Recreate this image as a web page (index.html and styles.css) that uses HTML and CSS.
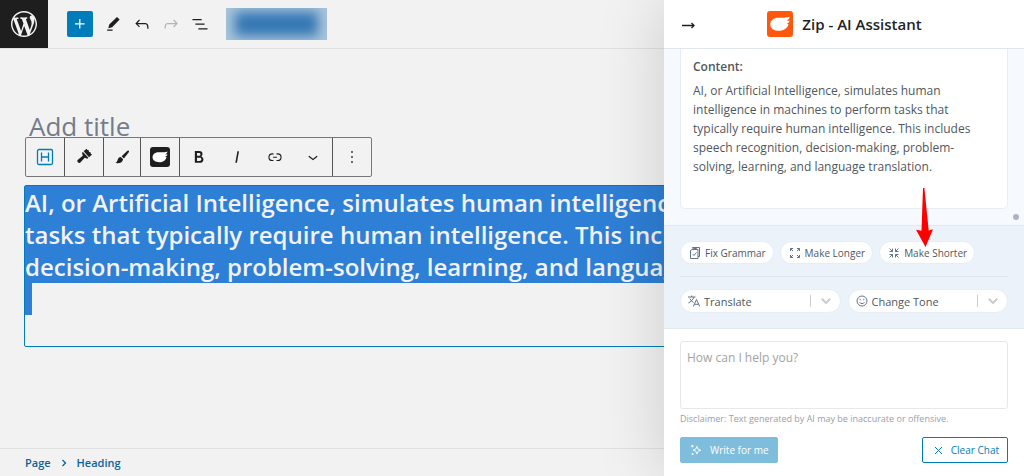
FILE: index.html
```
<!DOCTYPE html>
<html lang="en">
<head>
  <meta charset="utf-8">
  <title>Edit Page</title>
  <link rel="stylesheet" href="styles.css">
</head>
<body>
  <svg class="defs" width="0" height="0">
    <symbol id="zip" viewBox="0 0 26 26">
      <path d="M3.300 13.400C3.300 9.200 7 6.800 11.500 6.800c4 0 7.800.2 11.300-1-.4 1.900-1.500 3-3.300 3.700l3.200.2c-.5 1.700-1.700 2.700-3.400 3.100l2.200.5c-1 3.900-4.900 6.500-9.400 6.500-4.900 0-8.800-2.400-8.800-6.400z"/>
    </symbol>
  </svg>

  <div class="editor">
    <header class="top-bar">
      <a class="wp-logo" href="#" aria-label="View Pages">
        <svg width="26" height="26" viewBox="0 0 20 20"><path d="M20 10c0-5.51-4.49-10-10-10C4.48 0 0 4.49 0 10c0 5.52 4.48 10 10 10 5.51 0 10-4.48 10-10zM7.780 15.370L4.370 6.220c.55-.02 1.170-.08 1.170-.08.5-.06.44-1.130-.06-1.110 0 0-1.450.11-2.370.11-.18 0-.37 0-.58-.01C4.120 2.690 6.870 1.110 10 1.110c2.330 0 4.450.87 6.050 2.340-.68-.11-1.650.39-1.650 1.580 0 .74.45 1.360.9 2.100.35.61.55 1.360.55 2.460 0 1.490-1.400 5-1.400 5l-3.030-8.370c.54-.02.82-.17.82-.17.5-.05.44-1.250-.06-1.220 0 0-1.440.12-2.380.12-.87 0-2.330-.12-2.330-.12-.5-.03-.56 1.200-.06 1.220l.92.08 1.260 3.410zM17.410 10c.24-.64.74-1.870.43-4.250.7 1.290 1.050 2.710 1.050 4.250 0 3.290-1.730 6.240-4.400 7.780.97-2.590 1.940-5.200 2.920-7.780zM6.100 18.090C3.120 16.650 1.110 13.530 1.110 10c0-1.300.23-2.480.72-3.590C3.250 10.300 4.670 14.200 6.100 18.090zm4.030-6.630l2.580 6.980c-.86.29-1.760.45-2.710.45-.79 0-1.570-.11-2.290-.33.81-2.380 1.620-4.740 2.420-7.100z"/></svg>
      </a>
      <div class="tools">
        <button class="add" aria-label="Add block"><svg width="20" height="20" viewBox="0 0 24 24"><path d="M11 12.500V17.500H12.500V12.500H17.500V11H12.500V6H11V11H6V12.500H11Z"/></svg></button>
        <button aria-label="Tools"><svg width="20" height="20" viewBox="0 0 24 24"><path d="m20 6.500-3.200-3-9.300 9-1.200 4.700 4.700-1.200L20 6.500Zm-8.500 12H5V20h6.500v-1.500Z"/></svg></button>
        <button aria-label="Undo"><svg width="20" height="20" viewBox="0 0 24 24"><path d="M18.300 11.700c-.6-.6-1.400-.9-2.300-.9H6.700l2.900-3.300-1.100-1-4.500 5L8.500 16l1-1-2.700-2.700H16c.5 0 .9.2 1.300.5 1 1 1 3.400 1 4.500v.3h1.500v-.2c0-1.500 0-4.300-1.500-5.700z"/></svg></button>
        <button class="off" aria-label="Redo"><svg width="20" height="20" viewBox="0 0 24 24"><path d="M15.600 6.500l-1.100 1 2.900 3.300H8c-.9 0-1.700.3-2.300.9-1.400 1.500-1.400 4.200-1.400 5.600v.2h1.500v-.3c0-1.100 0-3.500 1-4.500.3-.3.7-.5 1.300-.5h9.200L14.500 15l1.100 1.100 4.600-4.600-4.600-5z"/></svg></button>
        <button aria-label="Document overview"><svg width="20" height="20" viewBox="0 0 24 24"><path d="M3 6h11v1.500H3V6Zm3.500 5.500h11V13h-11v-1.500ZM21 17H10v1.500h11V17Z"/></svg></button>
      </div>
      <div class="blurred"><span></span></div>
    </header>

    <main class="canvas">
      <input class="title" type="text" placeholder="Add title" aria-label="Add title">

      <div class="block-toolbar">
        <div class="group">
          <button class="blue" aria-label="Heading"><svg class="line" width="18" height="18" viewBox="0 0 18 18"><rect x="1.500" y="1.500" width="15" height="15" rx="1.500"/><path d="M5.500 4.500v9M12.500 4.500v9M5.500 9h7"/></svg></button>
        </div>
        <div class="group">
          <button aria-label="Copy styles"><svg width="16" height="16" viewBox="0 0 18 18"><g transform="rotate(48 9 9)"><path d="M4 0l1.500 1L7 0l1.500 1L10 0l1.500 1L13 0v5H4zM4 6h9v1.500l-2.800 1.500v1l.6 6.500c0 2-4.200 2-4.200 0L7 10V9L4 7.500z"/></g></svg></button>
        </div>
        <div class="group narrow">
          <button aria-label="Paste styles"><svg width="18" height="18" viewBox="0 0 18 18"><path d="M15.700 2.700c.6.600.3 1.200-.1 1.700L10.900 10.400 8.600 8.200l5.500-5.200c.5-.5 1.100-.8 1.600-.3zM7.800 9l2.300 2.200c-.3 2.700-2.900 4.600-7.800 3.900 1.500-.7 1.800-1.800 2.300-3.200.5-1.700 1.600-2.800 3.200-2.900z"/></svg></button>
        </div>
        <div class="group">
          <button aria-label="Zip AI"><span class="zip-dark"><svg width="20" height="20"><use href="#zip"/></svg></span></button>
        </div>
        <div class="group">
          <button aria-label="Bold"><svg width="20" height="20" viewBox="0 0 24 24"><path d="M14.700 11.300c1-.6 1.500-1.600 1.500-3 0-2.300-1.300-3.400-4-3.400H7v14h5.800c1.400 0 2.500-.3 3.300-1 .8-.7 1.200-1.700 1.200-2.900.1-1.900-.8-3.100-2.600-3.700zm-5.100-4h2.300c.6 0 1.100.1 1.400.4.3.3.5.7.5 1.200s-.2 1-.5 1.200c-.3.3-.8.4-1.400.4H9.600V7.300zm4.600 9c-.4.3-1 .4-1.700.4H9.600v-3.900h2.900c.7 0 1.300.2 1.700.5.4.3.6.8.6 1.500s-.2 1.200-.6 1.500z"/></svg></button>
          <button aria-label="Italic"><svg width="20" height="20" viewBox="0 0 24 24"><path d="M12.500 5L10 19h1.900l2.500-14z"/></svg></button>
          <button aria-label="Link"><svg width="18" height="18" viewBox="0 0 24 24"><path d="M10 17.400H8.400A5.200 5.200 0 1 1 8.400 7H10v1.500H8.400a3.700 3.700 0 0 0 0 7.400H10v1.500ZM14 7h1.600a5.200 5.200 0 0 1 0 10.400H14v-1.500h1.600a3.700 3.700 0 0 0 0-7.400H14V7Zm-4.500 6h5v-1.500h-5V13Z"/></svg></button>
          <button aria-label="More"><svg width="20" height="20" viewBox="0 0 24 24"><path d="M17.500 11.600L12 16l-5.500-4.400.9-1.200L12 14l4.500-3.600 1 1.200z"/></svg></button>
        </div>
        <div class="group">
          <button aria-label="Options"><svg width="20" height="20" viewBox="0 0 24 24"><path d="M13 19h-2v-2h2v2zm0-6h-2v-2h2v2zm0-6h-2V5h2v2z"/></svg></button>
        </div>
      </div>

      <div class="block">
        <h2>AI, or Artificial Intelligence, simulates human intelligence<br>tasks that typically require human intelligence. This includes<br>decision-making, problem-solving, learning, and language</h2>
        <div class="line-end"></div>
      </div>
    </main>

    <footer class="breadcrumb">
      <a href="#">Page</a>
      <svg class="line" width="6" height="8" viewBox="0 0 6 8"><path d="M1.500 1l3 3-3 3"/></svg>
      <a href="#">Heading</a>
    </footer>
  </div>

  <aside class="panel">
    <header class="panel-head">
      <button class="close" aria-label="Close panel"><svg class="line" width="14" height="10" viewBox="0 0 14 10"><path d="M1 6.500h12M10.500 4l2.500 2.500L10.500 9"/></svg></button>
      <div class="brand">
        <span class="zip-logo"><svg width="26" height="26"><use href="#zip"/></svg></span>
        <h1>Zip - AI Assistant</h1>
      </div>
    </header>

    <div class="chat">
      <div class="message">
        <h3>Content:</h3>
        <p>AI, or Artificial Intelligence, simulates human<br>intelligence in machines to perform tasks that<br>typically require human intelligence. This includes<br>speech recognition, decision-making, problem-<br>solving, learning, and language translation.</p>
      </div>
      <span class="dot"></span>
    </div>

    <div class="actions">
      <div class="pills">
        <button><svg width="14" height="14" viewBox="0 0 14 14"><path d="M4.500 2.500v-1h3M4 3.500h6v9H2.500V4.500zM5 1.500h6.500v9H10M5.500 3.500v-1h3v1M4.500 8l1.500 1.500L8.500 6.500"/></svg>Fix Grammar</button>
        <button><svg width="14" height="14" viewBox="0 0 14 14"><path d="M2.500 5V2.500H5M9 2.500h2.500V5M11.500 9v2.500H9M5 11.500H2.500V9M2.500 2.500l2.500 2.500M11.500 2.500L9 5M11.500 11.500L9 9M2.500 11.500L5 9"/></svg>Make Longer</button>
        <button class="target"><svg width="14" height="14" viewBox="0 0 14 14"><path d="M5.500 2.500v3h-3M8.500 2.500v3h3M8.500 11.500v-3h3M5.500 11.500v-3h-3M2.500 2.500l3 3M11.500 2.500l-3 3M11.500 11.500l-3-3M2.500 11.500l3-3"/></svg>Make Shorter
          <svg class="pointer" width="18" height="60" viewBox="0 0 18 60"><path d="M8 0h1.400l4.300 42.500 4.300-1.300L10.500 59 1 41.700l5.500 1z"/></svg>
        </button>
      </div>
      <div class="menus">
        <div class="menu">
          <svg width="14" height="14" viewBox="0 0 14 14"><path d="M1 3h7.500M4.700 1.500V3M7 3C6.300 5.500 4 7.800 1.300 9M2.800 4.500C3.600 6.200 5 7.600 6.500 8.400M6.300 12.500L9.500 5.500l3.200 7M7.400 10.300h4.200"/></svg>
          <select aria-label="Translate"><option>Translate</option></select>
          <i class="bar"></i>
          <svg class="arrow" width="10" height="6" viewBox="0 0 10 6"><path d="M.8.8L5 5 9.200.8"/></svg>
        </div>
        <div class="menu">
          <svg width="14" height="14" viewBox="0 0 14 14"><circle cx="7" cy="7" r="5"/><path d="M4.500 8.200c1 1.900 4 1.900 5 0M5.200 4.800v1.400M8.800 4.800v1.400"/></svg>
          <select aria-label="Change Tone"><option>Change Tone</option></select>
          <i class="bar"></i>
          <svg class="arrow" width="10" height="6" viewBox="0 0 10 6"><path d="M.8.8L5 5 9.200.8"/></svg>
        </div>
      </div>
    </div>

    <form class="prompt">
      <textarea placeholder="How can I help you?" aria-label="Prompt"></textarea>
      <p>Disclaimer: Text generated by AI may be inaccurate or offensive.</p>
      <div class="buttons">
        <button type="button" class="write"><svg width="12" height="12" viewBox="0 0 13 13"><path d="M7.500 2.500l1.200 3 3 1.200-3 1.200-1.200 3-1.200-3-3-1.200 3-1.200zM2.500.8v3M1 2.300h3M2.800 9.700v2.400M1.600 10.900H4"/></svg>Write for me</button>
        <button type="button" class="clear"><svg width="9" height="9" viewBox="0 0 9 9"><path d="M1 1l7 7M8 1L1 8"/></svg>Clear Chat</button>
      </div>
    </form>
  </aside>
</body>
</html>
```
FILE: styles.css
```
* {
  box-sizing: border-box;
}
body {
  margin: 0;
  font-family: "Open Sans", "Noto Sans", sans-serif;
  background: #f2f2f2;
  color: #1e1e1e;
  overflow: hidden;
}
h1, h2, h3, p {
  margin: 0;
}
button {
  display: flex;
  align-items: center;
  justify-content: center;
  padding: 0;
  border: 0;
  background: none;
  color: inherit;
  font: inherit;
}
svg {
  fill: currentColor;
  flex: none;
}
svg.line {
  fill: none;
  stroke: currentColor;
  stroke-width: 1.3;
}
.defs {
  position: absolute;
}

/* editor */
.editor {
  display: flex;
  flex-direction: column;
  height: 100vh;
}
.top-bar {
  display: flex;
  align-items: center;
  height: 49px;
  border-bottom: 1px solid #e0e0e0;
}
.wp-logo {
  display: flex;
  align-items: center;
  justify-content: center;
  width: 48px;
  height: 48px;
  background: #1e1e1e;
  color: #f2f2f2;
}
.tools {
  display: flex;
  gap: 3px;
  margin-left: 19px;
}
.tools button {
  width: 26px;
  height: 26px;
}
.tools .add {
  margin-right: 4px;
  border-radius: 2px;
  background: #007cba;
  color: #fff;
}
.tools .off {
  color: #b4b4b4;
}
.blurred {
  display: flex;
  width: 101px;
  height: 32px;
  margin-left: 13px;
  padding: 4px 9px;
  overflow: hidden;
  background: #a9c4dc;
}
.blurred span {
  flex: 1;
  background: #3578b4;
  filter: blur(6px);
}
.canvas {
  flex: 1;
  padding: 60px 0 0 24px;
}
.title {
  display: block;
  width: 100%;
  height: 28px;
  padding: 5px 5px 0;
  border: 0;
  background: none;
  font: 500 26px/24px "Open Sans", sans-serif;
}
.title::placeholder {
  color: #757b89;
}
.block-toolbar {
  display: flex;
  width: 347px;
  height: 40px;
  margin-left: 1px;
  border: 1px solid #777;
  border-radius: 2px;
  background: #f2f2f2;
}
.group {
  display: flex;
  border-right: 1px solid #555;
}
.group:last-child {
  border-right: 0;
}
.group button {
  width: 38px;
}
.group.narrow button {
  width: 36px;
}
.blue {
  color: #007cba;
}
.zip-dark {
  display: flex;
  border-radius: 3px;
  background: #1e1e1e;
  color: #fff;
}
.block {
  height: 162px;
  margin-top: 8px;
  border: 1px solid #007cba;
  border-radius: 2px;
}
.block h2 {
  padding-top: 1px;
  overflow: hidden;
  background: #2e7fd6;
  color: #f2f2f2;
  font-size: 24px;
  font-weight: 600;
  line-height: 32px;
  white-space: nowrap;
}
.line-end {
  width: 7px;
  height: 32px;
  background: #2e7fd6;
}
.breadcrumb {
  display: flex;
  align-items: center;
  gap: 10px;
  height: 28px;
  padding-left: 25px;
  border-top: 1px solid #e0e0e0;
  color: #0a6299;
  font-size: 11px;
  font-weight: 600;
}
.breadcrumb a {
  color: inherit;
  text-decoration: none;
}

/* assistant panel, slides over the editor */
.panel {
  position: absolute;
  top: 0;
  right: 0;
  bottom: 0;
  display: flex;
  flex-direction: column;
  width: 360px;
  background: #fff;
  box-shadow: 0 0 64px rgba(0,0,0,0.16);
}
.panel-head {
  display: flex;
  align-items: center;
  height: 49px;
  padding-left: 17px;
  border-bottom: 1px solid #dfe5ec;
}
.brand {
  display: flex;
  flex: 1;
  align-items: center;
  justify-content: center;
  gap: 9px;
  margin-right: 30px;
}
.brand h1 {
  color: #1d2327;
  font-size: 15px;
  font-weight: 600;
}
.zip-logo {
  display: flex;
  border-radius: 3px;
  background: #ff580e;
  color: #fff;
}
.chat {
  display: flex;
  flex: 1;
  align-items: flex-end;
  padding: 0 4px 16px 16px;
  background: #f6f9fe;
}
.message {
  width: 328px;
  height: 100%;
  padding: 8px 12px;
  border: 1px solid #e6edf5;
  border-top: 0;
  border-radius: 0 0 5px 5px;
  background: #fff;
  color: #50575e;
  font-size: 12px;
}
.message h3 {
  font-size: 12px;
  font-weight: 600;
  line-height: 20px;
}
.message p {
  margin-top: 4px;
  line-height: 19px;
}
.dot {
  width: 6px;
  height: 6px;
  margin: 0 0 -11px 5px;
  border-radius: 50%;
  background: #abb4c3;
}
.actions {
  padding: 15px 16px;
  border-top: 1px solid #e2e8f0;
  border-bottom: 1px solid #e2e8f0;
  background: #ebf2fa;
  color: #50575e;
  font-size: 11px;
}
.actions svg {
  fill: none;
  stroke: #64748b;
}
.pills {
  display: flex;
  gap: 6px;
  padding-bottom: 12px;
  border-bottom: 1px solid #e2e6eb;
  font-size: 10px;
}
.pills button {
  gap: 3px;
  height: 23px;
  padding: 0 7px;
  border: 1px solid #e6edf5;
  border-radius: 12px;
  background: #fff;
}
.target {
  position: relative;
}
.actions .pointer {
  position: absolute;
  right: 41px;
  bottom: 15px;
  fill: #f00;
  stroke: none;
}
.menus {
  display: flex;
  gap: 7px;
  padding: 12px 0 0;
}
.menu {
  display: flex;
  flex: 1;
  align-items: center;
  height: 24px;
  padding: 0 9px 0 6px;
  border: 1px solid #e6edf5;
  border-radius: 12px;
  background: #fff;
}
.menu select {
  flex: 1;
  min-width: 0;
  padding: 0 0 0 3px;
  appearance: none;
  border: 0;
  background: none;
  color: inherit;
  font: inherit;
}
.bar {
  width: 1px;
  height: 12px;
  margin-right: 10px;
  background: #ccc;
}
.actions .arrow {
  stroke: #ccc;
  stroke-width: 2px;
}
.prompt {
  padding: 12px 16px 13px;
}
.prompt textarea {
  display: block;
  width: 100%;
  height: 68px;
  padding: 6px;
  border: 1px solid #e8e8ea;
  border-radius: 3px;
  resize: none;
  font: 12px/20px "Open Sans", sans-serif;
}
.prompt textarea::placeholder {
  color: #a3a3a3;
}
.prompt p {
  margin: 2px 0 11px;
  color: #9a9ea6;
  font-size: 9px;
  line-height: 15px;
}
.buttons {
  display: flex;
  justify-content: space-between;
}
.buttons button {
  gap: 8px;
  height: 26px;
  padding: 0 8px 0 9px;
  border: 1px solid #007cba;
  border-radius: 2px;
  color: #007cba;
  font-size: 10px;
}
.buttons svg {
  fill: none;
  stroke: currentColor;
}
.buttons .clear {
  padding-left: 11px;
}
.buttons .write {
  border-color: #7fbddc;
  background: #7fbddc;
  color: #fff;
}
```
